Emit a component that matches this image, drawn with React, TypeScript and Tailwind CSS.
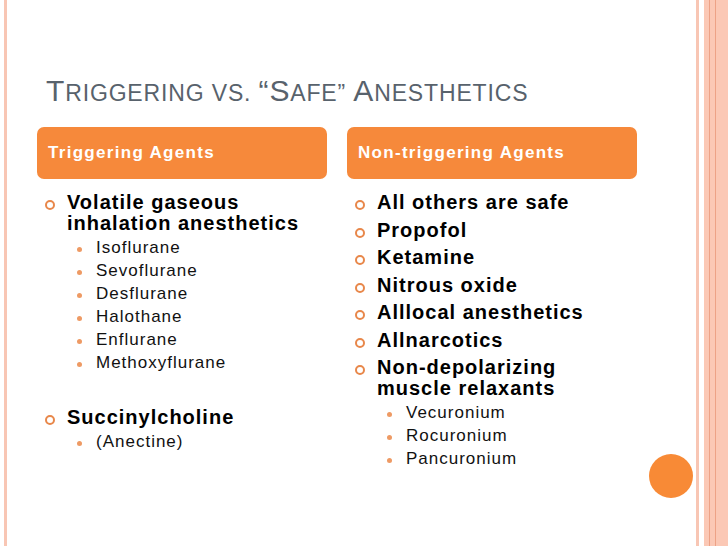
type Item = {
  label: string[];
  subs?: string[];
  gap?: string;
};

const triggering: Item[] = [
  {
    label: ["Volatile gaseous", "inhalation anesthetics"],
    subs: [
      "Isoflurane",
      "Sevoflurane",
      "Desflurane",
      "Halothane",
      "Enflurane",
      "Methoxyflurane",
    ],
  },
  { label: ["Succinylcholine"], subs: ["(Anectine)"], gap: "mt-[33px]" },
];

const nonTriggering: Item[] = [
  { label: ["All others are safe"] },
  { label: ["Propofol"] },
  { label: ["Ketamine"] },
  { label: ["Nitrous oxide"] },
  { label: ["Alllocal anesthetics"] },
  { label: ["Allnarcotics"] },
  {
    label: ["Non-depolarizing", "muscle relaxants"],
    subs: ["Vecuronium", "Rocuronium", "Pancuronium"],
  },
];

const Column = ({ title, items }: { title: string; items: Item[] }) => {
  return (
    <div className="flex flex-col">
      <div className="flex h-[52px] items-center rounded-[7px] bg-[#f6893b] pl-[11px]">
        <span className="text-[17px] font-bold tracking-[1.3px] text-white">
          {title}
        </span>
      </div>

      <div className="mt-[13px] flex flex-col">
        {items.map((item, i) => (
          <div key={i} className={i === 0 ? "" : item.gap ?? "mt-[6.5px]"}>
            <div className="flex items-start">
              <span className="ml-[8px] mt-[8px] size-[10px] shrink-0 rounded-full border-[2.5px] border-[#e8874a]" />
              <div className="ml-[12px] text-[20px] font-bold leading-[21px] tracking-[1px] text-black">
                {item.label.map((line) => (
                  <div key={line}>{line}</div>
                ))}
              </div>
            </div>

            {item.subs && (
              <div className="mt-[2px] flex flex-col">
                {item.subs.map((sub) => (
                  <div key={sub} className="flex items-start">
                    <span className="ml-[40px] mt-[11px] size-[5px] shrink-0 rounded-full bg-[#ee9a64]" />
                    <span className="ml-[14px] text-[17px] leading-[23px] tracking-[1px] text-[#111]">
                      {sub}
                    </span>
                  </div>
                ))}
              </div>
            )}
          </div>
        ))}
      </div>
    </div>
  );
}

export default function App() {
  return (
    <div className="flex h-[546px] w-[728px] overflow-hidden bg-white font-['Liberation_Sans',Arial,sans-serif]">
      {/* left border */}
      <div className="w-[4px]" />
      <div className="w-[3px] bg-[#f8c6b4]" />

      <main className="relative flex-1 pl-[30px] pt-[76px]">
        <h1 className="ml-[9px] text-[23px] leading-[30px] tracking-[0.85px] text-[#58626c]">
          <span className="text-[30px]">T</span>RIGGERING VS.{" "}
          <span className="text-[30px]">“S</span>AFE”{" "}
          <span className="text-[30px]">A</span>NESTHETICS
        </h1>

        <div className="mt-[19px] grid grid-cols-[290px_290px] gap-x-[20px]">
          <Column title="Triggering Agents" items={triggering} />
          <Column title="Non-triggering Agents" items={nonTriggering} />
        </div>

        <div className="absolute left-[642px] top-[454px] size-[44px] rounded-full bg-[#f88a36]" />
      </main>

      {/* right border stripes */}
      <div className="w-[3px] bg-[#f8c6b4]" />
      <div className="w-[5px]" />
      <div className="flex w-[24px] bg-[#fbc8b5]">
        <div className="w-[5px]" />
        <div className="w-[1px] bg-[#eda286]" />
        <div className="w-[5px]" />
        <div className="w-[1px] bg-[#eda286]" />
      </div>
    </div>
  );
}
